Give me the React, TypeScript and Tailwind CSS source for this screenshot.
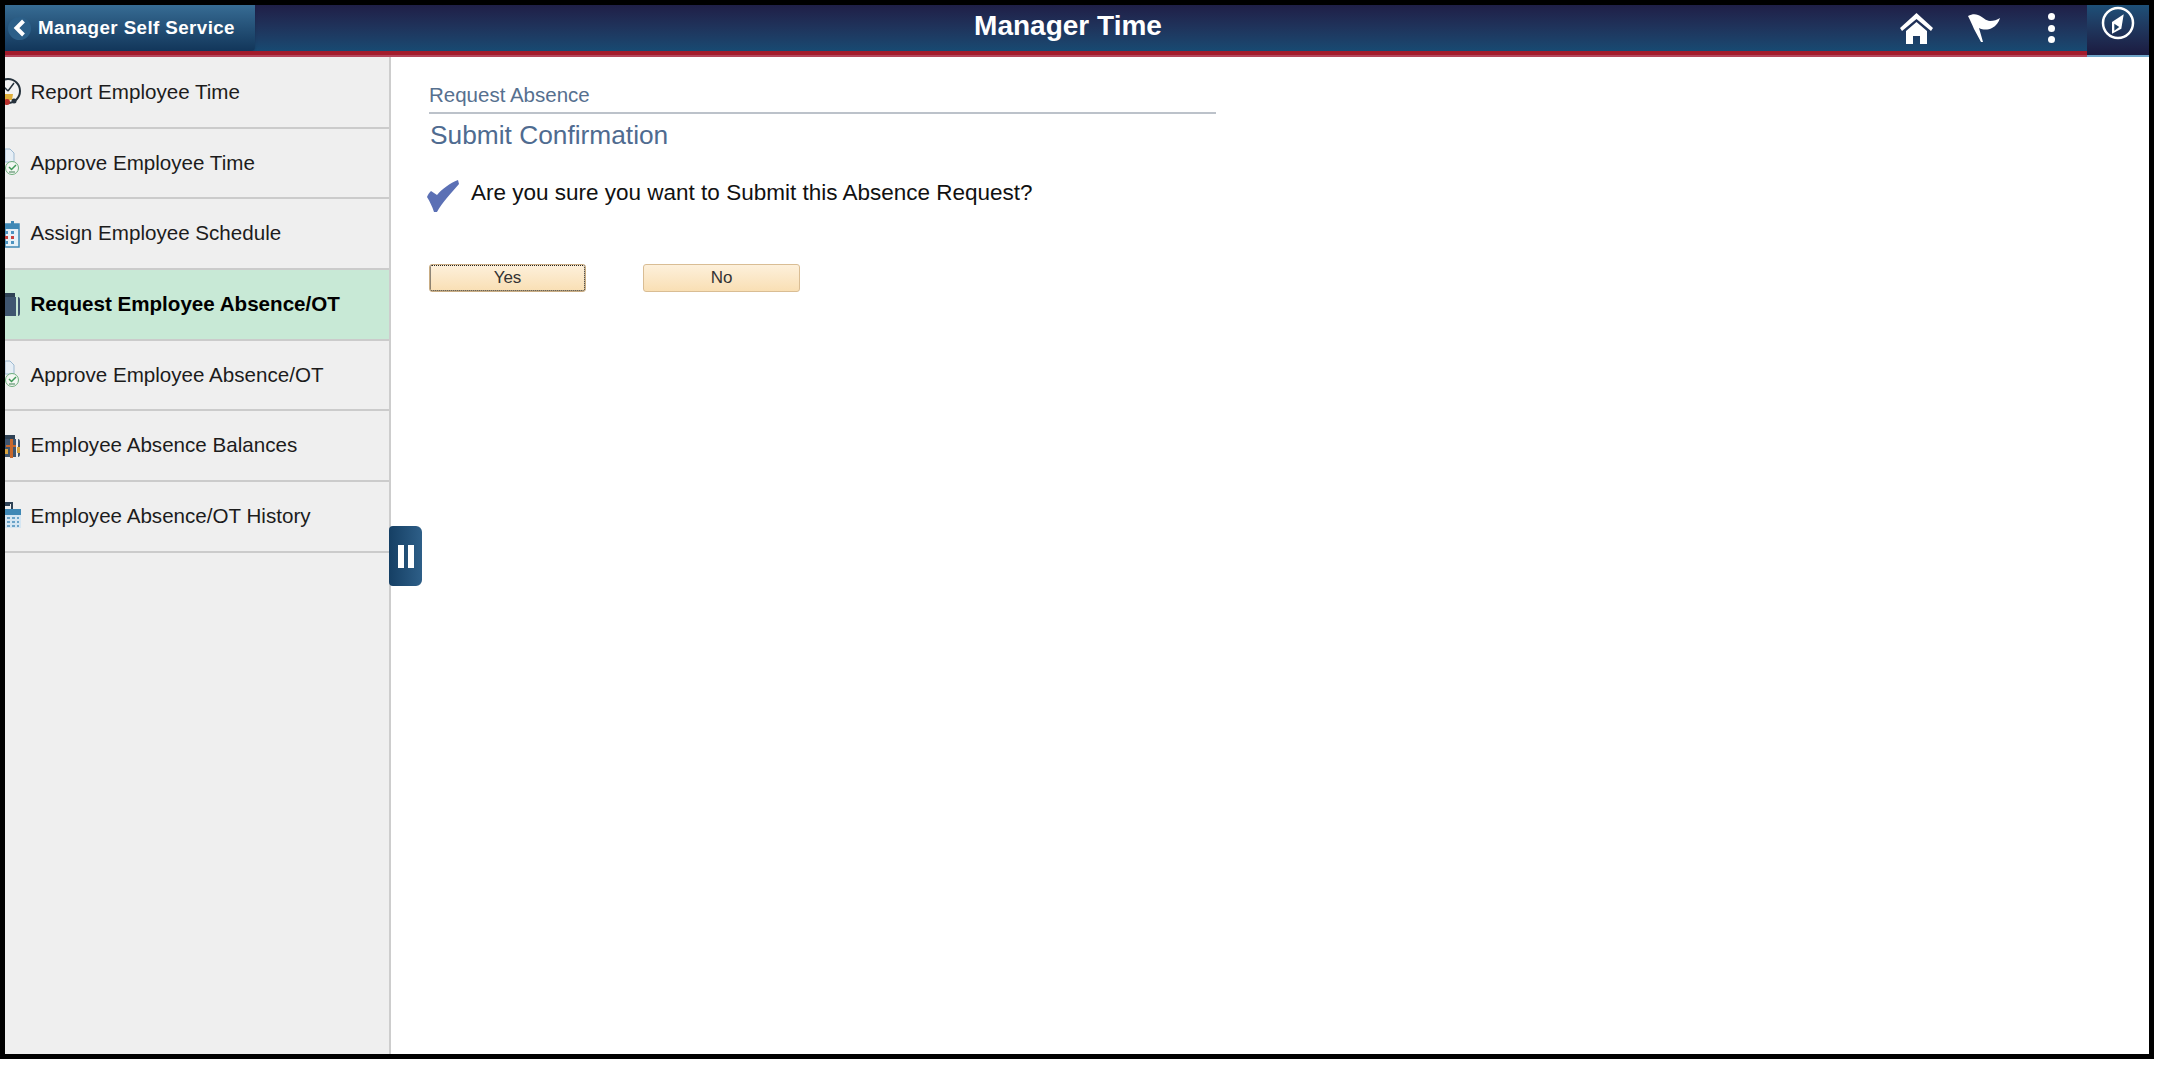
const font = { fontFamily: '"Liberation Sans", Arial, sans-serif' }

const ClockIcon = () => (
  <svg width="17" height="30" viewBox="0 0 17 30">
    <circle cx="3" cy="14" r="12" fill="#f4f4f4" stroke="#26323c" strokeWidth="2" />
    <path d="M3 14 L9 6 M3 14 L-2 9" stroke="#26323c" strokeWidth="1.5" />
    <path d="M0 17 H8 L7 23 H0 Z" fill="#e0b03c" />
    <circle cx="2" cy="25" r="3" fill="#b9302c" />
    <circle cx="9" cy="24" r="2.5" fill="#26323c" />
  </svg>
)

const ApproveIcon = () => (
  <svg width="17" height="30" viewBox="0 0 17 30">
    <path d="M0 1 H5 L9 5 V14 H0 Z" fill="#e6eef5" stroke="#9dbad2" />
    <circle cx="7" cy="20" r="6.5" fill="#f3f7f2" stroke="#6fae7d" />
    <path d="M4 19 L6.5 21.5 L11 17" fill="none" stroke="#3f9a58" strokeWidth="1.5" />
    <path d="M4 24 H10" stroke="#3f7d55" />
  </svg>
)

const CalendarIcon = () => (
  <svg width="17" height="30" viewBox="0 0 17 30">
    <path d="M0 5 H14 V28 H0 Z" fill="#e6f0f7" stroke="#3f88b5" strokeWidth="1.5" />
    <path d="M0 5 H14 V10 H0 Z" fill="#3f88b5" />
    <path d="M6 2 H9 V7 H6 Z" fill="#3f88b5" />
    <path d="M0 12 H3 V15 H0 Z M6 12 H9 V15 H6 Z M0 22 H3 V25 H0 Z" fill="#4d93c0" />
    <path d="M0 17 H3 V20 H0 Z M6 17 H9 V20 H6 Z" fill="#c9403c" />
    <path d="M6 22 H9 V25 H6 Z" fill="#4d93c0" />
  </svg>
)

const BriefcaseIcon = () => (
  <svg width="17" height="30" viewBox="0 0 17 30">
    <path d="M0 4 H10 V9 H0 Z" fill="#2f4255" />
    <path d="M0 8 H11 V27 H0 Z" fill="#3f5670" />
    <path d="M13 8 Q15 8 15 11 V24 Q15 27 13 27 Z" fill="#3f5670" />
  </svg>
)

const BalancesIcon = () => (
  <svg width="17" height="30" viewBox="0 0 17 30">
    <path d="M0 4 H10 V8 H0 Z" fill="#2f4255" />
    <path d="M0 8 H11 V26 H0 Z" fill="#3f5670" />
    <path d="M13 8 Q15 8 15 11 V23 Q15 26 13 26 Z" fill="#3f5670" />
    <path d="M5 8 H8 V27 H5 Z M1 14 H11 V16 H1 Z" fill="#c8682c" />
    <path d="M0 18 H3 V23 H0 Z M12 16 H15 V22 H12 Z" fill="#d9a441" />
  </svg>
)

const HistoryIcon = () => (
  <svg width="17" height="30" viewBox="0 0 17 30">
    <path d="M0 2 H7 V8 M0 4 H5" fill="none" stroke="#2f4255" strokeWidth="2" />
    <path d="M0 8 H16 V14 H0 Z" fill="#3f88b5" />
    <path d="M0 14 H16 V27 H0 Z" fill="#d5e6f2" />
    <path d="M2 16 H5 V18 H2 Z M7 16 H10 V18 H7 Z M12 16 H14 V18 H12 Z M2 20 H5 V22 H2 Z M7 20 H10 V22 H7 Z M12 20 H14 V22 H12 Z M2 24 H5 V26 H2 Z M7 24 H10 V26 H7 Z M12 24 H14 V26 H12 Z" fill="#6aa3c8" />
  </svg>
)

const items = [
  { label: 'Report Employee Time', icon: <ClockIcon /> },
  { label: 'Approve Employee Time', icon: <ApproveIcon /> },
  { label: 'Assign Employee Schedule', icon: <CalendarIcon /> },
  { label: 'Request Employee Absence/OT', icon: <BriefcaseIcon />, active: true },
  { label: 'Approve Employee Absence/OT', icon: <ApproveIcon /> },
  { label: 'Employee Absence Balances', icon: <BalancesIcon /> },
  { label: 'Employee Absence/OT History', icon: <HistoryIcon /> },
]

const App = () => {
  return (
    <div className="w-[2154px] h-[1059px] border-[5px] border-black bg-white flex flex-col overflow-hidden" style={font}>
      {/* Banner */}
      <header className="relative flex h-[52px] shrink-0">
        <div className="flex-1 flex flex-col">
          <div className="flex-1 flex justify-between bg-gradient-to-b from-[#1f1f47] to-[#174a72]">
            <a className="flex items-center w-[250px] h-[46px] bg-gradient-to-b from-[#376c94] to-[#12365a] rounded-br-sm shadow-sm text-white font-bold text-[18.8px] tracking-[0.4px]">
              <span className="flex items-center justify-center w-[23px] h-[23px] ml-[3px] mr-[7px] rounded-full bg-[#2c5f88]">
                <svg width="13" height="18" viewBox="0 0 13 18">
                  <path d="M10.5 2 L3.5 9 L10.5 16" fill="none" stroke="white" strokeWidth="4" />
                </svg>
              </span>
              Manager Self Service
            </a>
            <div className="flex items-start h-[46px]">
              <svg className="mt-[8px] mr-[35px]" width="33" height="31" viewBox="0 0 33 31" fill="white">
                <path d="M16.5 0 L33 15 L31 18 L16.5 6 L2 18 L0 15 Z" />
                <path d="M16.5 9 L27 18 V31 H20 V23 H13 V31 H6 V18 Z" />
              </svg>
              <svg className="mt-[9px] mr-[47px]" width="33" height="29" viewBox="0 0 33 29" fill="white">
                <path d="M0 2 C4 0 7 0 10 1 C15 3 18 7 22 7 C26 7 29 6 32 4 C31 8 28 12 24 14 C20 16 15 16 11 14 L15 28 L13 28 L6 15 C4 10 2 6 0 2 Z" />
              </svg>
              <div className="flex flex-col gap-[4.5px] mt-[8px] mr-[32px]">
                <span className="w-[7px] h-[7px] rounded-full bg-white"></span>
                <span className="w-[7px] h-[7px] rounded-full bg-white"></span>
                <span className="w-[7px] h-[7px] rounded-full bg-white"></span>
              </div>
            </div>
          </div>
          <div className="h-[4px] bg-[#a31b2b]"></div>
          <div className="h-[2px] bg-[#b4475c]"></div>
        </div>
        <div className="w-[62px] h-[52px] flex justify-center pt-[1px] bg-gradient-to-b from-[#1d5078] to-[#1b1b40] border-b-2 border-[#6fa5c8]">
          <svg width="34" height="34" viewBox="0 0 34 34">
            <circle cx="17" cy="17" r="15" fill="none" stroke="white" strokeWidth="2.5" />
            <path d="M22.7 8.3 L11 16 L11 27.7 L20.3 22.7 Z" fill="white" />
            <path d="M13.3 17.7 L18.3 21 L13.3 24.7 Z" fill="#1c3d62" />
          </svg>
        </div>
        <h1 className="absolute left-0 right-0 top-[3px] pr-[18px] text-center text-white font-bold text-[28px] leading-[35px]">Manager Time</h1>
      </header>

      <div className="relative flex flex-1 min-h-0">
        {/* Side nav */}
        <nav className="w-[386px] shrink-0 pt-[1px] bg-[#efefef] border-r-2 border-[#cdcdcd]">
          {items.map((item) => (
            <div
              key={item.label}
              className={
                item.active
                  ? 'flex items-center h-[70.7px] border-b-2 border-[#cbcbcb] bg-[#c8e9d6] text-black font-bold text-[20.6px]'
                  : 'flex items-center h-[70.7px] border-b-2 border-[#cbcbcb] text-[#1c1c1c] text-[20.6px]'
              }
            >
              <span className="w-[17px] h-[30px] mr-[8.5px] shrink-0">{item.icon}</span>
              {item.label}
            </div>
          ))}
        </nav>

        {/* Pause tab */}
        <div className="absolute left-[384px] top-[469px] w-[33px] h-[60px] flex items-center justify-center gap-[4px] rounded-r-md rounded-l-sm bg-gradient-to-r from-[#153f64] to-[#2e5f88]">
          <span className="w-[6px] h-[23px] bg-white"></span>
          <span className="w-[6px] h-[23px] bg-white"></span>
        </div>

        {/* Content */}
        <main className="flex-1 pl-[38px] pt-[26px]">
          <div className="w-[787px] h-[31px] border-b-2 border-[#bcc2ca] text-[#56708f] text-[20.5px] leading-[24px]">Request Absence</div>
          <h2 className="mt-[5px] pl-[1px] text-[#4f6b90] text-[26.3px] leading-[32px]">Submit Confirmation</h2>
          <div className="flex items-start mt-[26px]">
            <svg className="mt-[2px] ml-[-2px]" width="34" height="34" viewBox="0 0 34 34">
              <path d="M31 1 L32 5 C24 14 15 24 10 33 L7 33 C5 27 3 23 0 18 C1 15 3 13 4 12 L10 16 C15 10 23 4 31 1 Z" fill="#5b70b5" />
            </svg>
            <span className="ml-[10px] mt-[2px] text-[#111] text-[22.5px] leading-[28px]">Are you sure you want to Submit this Absence Request?</span>
          </div>
          <div className="flex gap-[57px] mt-[51px]">
            <button className="w-[157px] h-[28px] rounded-[3px] bg-gradient-to-b from-[#fdf0db] to-[#f9dfb4] border border-[#c9ad84] outline-1 outline-dotted outline-[#222] outline-offset-[-2px] text-[#333] text-[17px]">Yes</button>
            <button className="w-[157px] h-[28px] rounded-[3px] bg-gradient-to-b from-[#fdf0db] to-[#f9dfb4] border border-[#d9bd94] text-[#333] text-[17px]">No</button>
          </div>
        </main>
      </div>
    </div>
  )
}

export default App
